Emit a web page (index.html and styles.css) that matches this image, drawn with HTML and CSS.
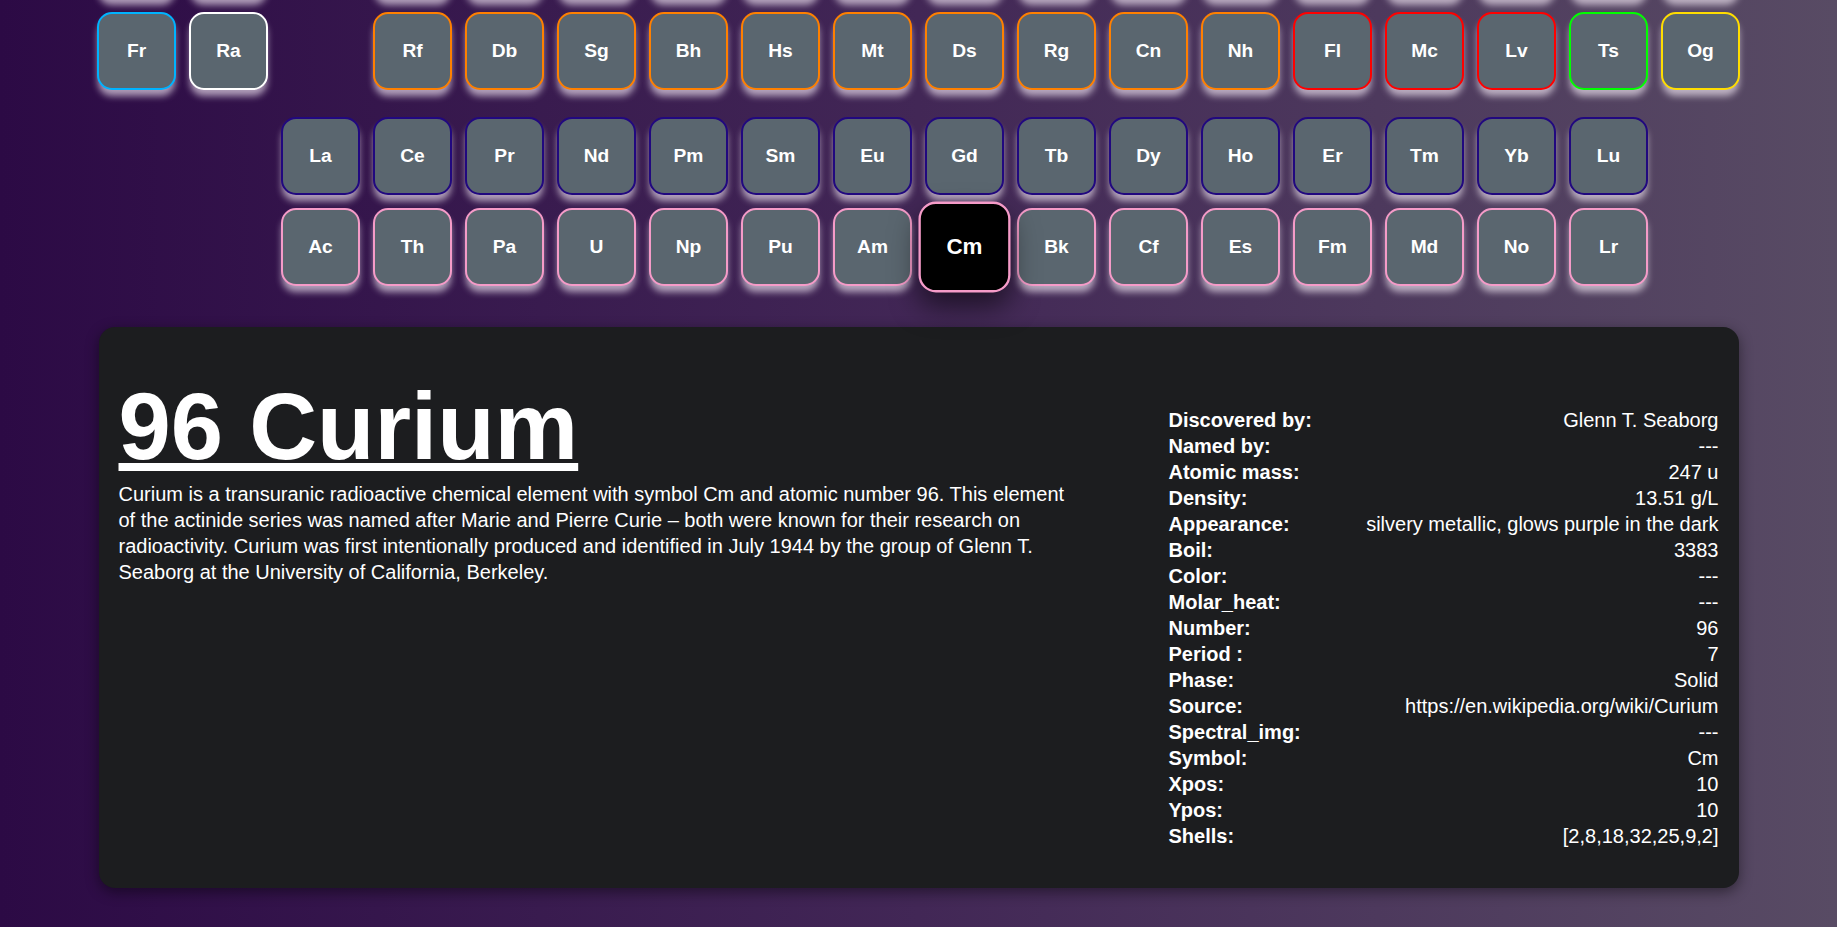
FILE: index.html
```html
<!DOCTYPE html>
<html lang="en">
<head>
<meta charset="utf-8">
<title>Periodic Table – Curium</title>
<link rel="stylesheet" href="styles.css">
</head>
<body>
<main class="page">
  <section class="table">
    <div class="main-grid">
      <div class="tile alkali">Cs</div>
      <div class="tile alkaline">Ba</div>
      <div class="gap-cell"></div>
      <div class="tile transition">Hf</div>
      <div class="tile transition">Ta</div>
      <div class="tile transition">W</div>
      <div class="tile transition">Re</div>
      <div class="tile transition">Os</div>
      <div class="tile transition">Ir</div>
      <div class="tile transition">Pt</div>
      <div class="tile transition">Au</div>
      <div class="tile transition">Hg</div>
      <div class="tile post">Tl</div>
      <div class="tile post">Pb</div>
      <div class="tile post">Bi</div>
      <div class="tile post">Po</div>
      <div class="tile halogen">At</div>
      <div class="tile noble">Rn</div>

      <div class="tile alkali">Fr</div>
      <div class="tile alkaline">Ra</div>
      <div class="gap-cell"></div>
      <div class="tile transition">Rf</div>
      <div class="tile transition">Db</div>
      <div class="tile transition">Sg</div>
      <div class="tile transition">Bh</div>
      <div class="tile transition">Hs</div>
      <div class="tile transition">Mt</div>
      <div class="tile transition">Ds</div>
      <div class="tile transition">Rg</div>
      <div class="tile transition">Cn</div>
      <div class="tile transition">Nh</div>
      <div class="tile post">Fl</div>
      <div class="tile post">Mc</div>
      <div class="tile post">Lv</div>
      <div class="tile halogen">Ts</div>
      <div class="tile noble">Og</div>
    </div>

    <div class="f-grid">
      <div class="tile lanthanide first">La</div>
      <div class="tile lanthanide">Ce</div>
      <div class="tile lanthanide">Pr</div>
      <div class="tile lanthanide">Nd</div>
      <div class="tile lanthanide">Pm</div>
      <div class="tile lanthanide">Sm</div>
      <div class="tile lanthanide">Eu</div>
      <div class="tile lanthanide">Gd</div>
      <div class="tile lanthanide">Tb</div>
      <div class="tile lanthanide">Dy</div>
      <div class="tile lanthanide">Ho</div>
      <div class="tile lanthanide">Er</div>
      <div class="tile lanthanide">Tm</div>
      <div class="tile lanthanide">Yb</div>
      <div class="tile lanthanide">Lu</div>

      <div class="tile actinide first">Ac</div>
      <div class="tile actinide">Th</div>
      <div class="tile actinide">Pa</div>
      <div class="tile actinide">U</div>
      <div class="tile actinide">Np</div>
      <div class="tile actinide">Pu</div>
      <div class="tile actinide">Am</div>
      <div class="tile actinide selected">Cm</div>
      <div class="tile actinide">Bk</div>
      <div class="tile actinide">Cf</div>
      <div class="tile actinide">Es</div>
      <div class="tile actinide">Fm</div>
      <div class="tile actinide">Md</div>
      <div class="tile actinide">No</div>
      <div class="tile actinide">Lr</div>
    </div>
  </section>

  <section class="details">
    <div class="intro">
      <h1 class="title">96 Curium</h1>
      <p class="summary">Curium is a transuranic radioactive chemical element with symbol Cm and atomic number 96. This element of the actinide series was named after Marie and Pierre Curie – both were known for their research on radioactivity. Curium was first intentionally produced and identified in July 1944 by the group of Glenn T. Seaborg at the University of California, Berkeley.</p>
    </div>
    <dl class="facts">
      <dt>Discovered by:</dt><dd>Glenn T. Seaborg</dd>
      <dt>Named by:</dt><dd>---</dd>
      <dt>Atomic mass:</dt><dd>247 u</dd>
      <dt>Density:</dt><dd>13.51 g/L</dd>
      <dt>Appearance:</dt><dd>silvery metallic, glows purple in the dark</dd>
      <dt>Boil:</dt><dd>3383</dd>
      <dt>Color:</dt><dd>---</dd>
      <dt>Molar_heat:</dt><dd>---</dd>
      <dt>Number:</dt><dd>96</dd>
      <dt>Period :</dt><dd>7</dd>
      <dt>Phase:</dt><dd>Solid</dd>
      <dt>Source:</dt><dd>https://en.wikipedia.org/wiki/Curium</dd>
      <dt>Spectral_img:</dt><dd>---</dd>
      <dt>Symbol:</dt><dd>Cm</dd>
      <dt>Xpos:</dt><dd>10</dd>
      <dt>Ypos:</dt><dd>10</dd>
      <dt>Shells:</dt><dd>[2,8,18,32,25,9,2]</dd>
    </dl>
  </section>
</main>
</body>
</html>
```

FILE: styles.css
```css
html, body {
  margin: 0;
  padding: 0;
  height: 100%;
}

body {
  background: linear-gradient(to right, #2c0a45 0%, #422756 50%, #584b64 100%);
  font-family: "Liberation Sans", Arial, sans-serif;
  color: #ffffff;
  overflow: hidden;
}

.page {
  width: 1643px;
  margin: 0 auto;
}

.table {
  margin-top: -79px;
}

.main-grid,
.f-grid {
  display: grid;
  grid-template-columns: repeat(18, 79px);
  grid-auto-rows: 78px;
  column-gap: 13px;
  row-gap: 13px;
}

.f-grid {
  margin-top: 27px;
}

.f-grid .first {
  grid-column-start: 3;
}

.tile {
  box-sizing: border-box;
  display: flex;
  align-items: center;
  justify-content: center;
  background: #5a666f;
  border: 2px solid #ffffff;
  border-radius: 15px;
  font-size: 19.2px;
  font-weight: 700;
  color: #ffffff;
  box-shadow: 0 7px 7px -1px rgba(255, 245, 255, 0.62);
}

.alkali { border-color: #00b3ff; }
.alkaline { border-color: #ffffff; }
.transition { border-color: #ff8000; }
.post { border-color: #ff0000; }
.halogen { border-color: #00ff00; }
.noble { border-color: #ffdd00; }
.lanthanide { border-color: #21087f; }
.actinide { border-color: #f59bc8; }

.tile.selected {
  background: #000000;
  transform: scale(1.165);
  box-shadow: 0 12px 24px rgba(0, 0, 0, 0.55);
  position: relative;
  z-index: 1;
}

.details {
  box-sizing: border-box;
  width: 1640px;
  margin: 41px auto 0;
  padding: 46px 20px 39px;
  background: #1c1d1f;
  border-radius: 16px;
  box-shadow: 0 4px 14px rgba(0, 0, 0, 0.45);
  display: grid;
  grid-template-columns: 960px 550px;
  justify-content: space-between;
  align-items: start;
}

.title {
  margin: 0;
  font-size: 94px;
  line-height: 108px;
  font-weight: 700;
  text-decoration: underline;
  text-decoration-thickness: 8px;
  text-underline-offset: 4px;
}

.summary {
  margin: 0;
  font-size: 20px;
  line-height: 26px;
}

.facts {
  margin: 34px 0 0;
  display: grid;
  grid-template-columns: auto 1fr;
  font-size: 20px;
  line-height: 26px;
}

.facts dt {
  font-weight: 700;
  white-space: nowrap;
}

.facts dd {
  margin: 0;
  text-align: right;
  white-space: nowrap;
}
```
